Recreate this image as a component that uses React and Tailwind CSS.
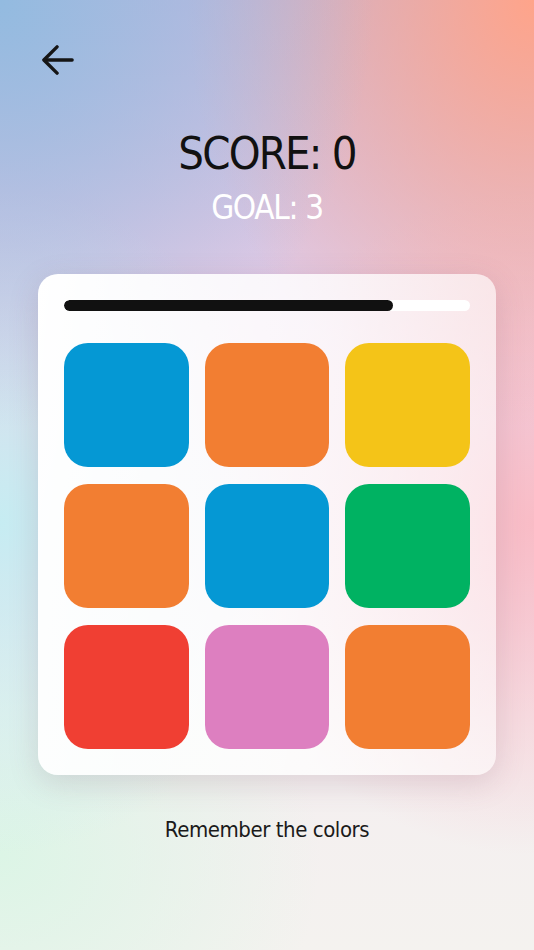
import React from "react";

const tiles = [
  "bg-[#0598d4]",
  "bg-[#f27e32]",
  "bg-[#f4c418]",
  "bg-[#f27e32]",
  "bg-[#0598d4]",
  "bg-[#00b262]",
  "bg-[#f03f33]",
  "bg-[#dd7fc0]",
  "bg-[#f27e32]",
];

function App() {
  const progress = 81;

  return (
    <div className="relative min-h-[950px] w-full overflow-hidden bg-[linear-gradient(180deg,#c4b8de_0%,#e6cde6_35%,#f4eef0_75%,#f4f2ef_100%)] font-['DejaVu_Sans_Condensed',sans-serif]">
      {/* colour washes */}
      <div className="pointer-events-none absolute inset-0 bg-[radial-gradient(ellipse_70%_45%_at_0%_0%,#93bbe0_0%,rgba(147,187,224,0)_100%),radial-gradient(ellipse_65%_45%_at_100%_0%,#ffa48a_0%,rgba(255,164,138,0)_100%),radial-gradient(ellipse_55%_35%_at_0%_55%,#c6ecf2_0%,rgba(198,236,242,0)_100%),radial-gradient(ellipse_60%_35%_at_100%_55%,#f9bcc6_0%,rgba(249,188,198,0)_100%),radial-gradient(ellipse_60%_30%_at_0%_90%,#dcf5e6_0%,rgba(220,245,230,0)_100%)]" />

      <div className="relative flex flex-col">
        <div className="px-[42px] pt-[44px]">
          <button className="flex h-8 w-8 items-center justify-center text-[#151515]">
            <svg width="34" height="32" viewBox="0 0 34 32" fill="none" stroke="currentColor" strokeWidth="3.6" strokeLinecap="round" strokeLinejoin="round">
              <path d="M32 16H3" />
              <path d="M16 2L2 16l14 14" />
            </svg>
          </button>
        </div>

        <div className="mt-[50px] flex flex-col items-center">
          <div className="text-[45px] leading-[56px] font-light tracking-[-0.04em] text-[#111]">SCORE: 0</div>
          <div className="mt-[6px] text-[33px] leading-[40px] font-light tracking-[-0.04em] text-white">GOAL: 3</div>
        </div>

        <div className="mx-[38px] mt-[46px] rounded-[20px] bg-[linear-gradient(100deg,#ffffff_0%,rgba(255,255,255,0.8)_55%,rgba(255,255,255,0.55)_100%)] p-[26px] shadow-[0_8px_30px_rgba(120,80,100,0.18)]">
          <div className="h-[11px] w-full overflow-hidden rounded-full bg-white">
            <div className="h-full rounded-full bg-[#111]" style={{ width: progress + "%" }} />
          </div>
          <div className="mt-[32px] grid grid-cols-3 gap-x-[16px] gap-y-[17px]">
            {tiles.map((c, i) => (
              <div key={i} className={"h-[124px] rounded-[24px] " + c} />
            ))}
          </div>
        </div>

        <div className="mt-[38px] text-center text-[22px] font-light tracking-[-0.02em] text-[#1a1a1a]">
          Remember the colors
        </div>
      </div>
    </div>
  );
}

export default App;
